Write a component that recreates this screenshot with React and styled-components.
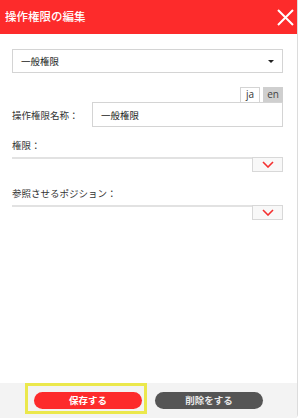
import React from 'react';
import styled, { createGlobalStyle } from 'styled-components';

const GlobalStyle = createGlobalStyle`
  html, body {
    margin: 0;
    padding: 0;
    background: #fff;
  }
  body {
    font-family: "Noto Sans CJK JP", "Noto Sans", sans-serif;
    color: #333;
  }
`;

const Panel = styled.div`
  width: 298px;
  height: 418px;
  display: flex;
  flex-direction: column;
  box-sizing: border-box;
  border-right: 1px solid #dcdcdc;
  border-bottom-right-radius: 4px;
  overflow: hidden;
`;

const Header = styled.div`
  height: 34px;
  flex: none;
  background: #fd2b2b;
  display: flex;
  align-items: center;
  justify-content: space-between;
  padding: 0 3px 2px 5px;
  box-sizing: border-box;
`;

const Title = styled.h1`
  margin: 0;
  font-size: 11.5px;
  font-weight: 500;
  color: #fff;
`;

const CloseBtn = styled.button`
  width: 17px;
  height: 17px;
  padding: 0;
  border: 0;
  background: none;
  display: flex;
  margin-top: 2px;
`;

const Body = styled.div`
  flex: 1;
  padding: 15px 14px 0 12px;
`;

const SelectBox = styled.div`
  height: 24px;
  box-sizing: border-box;
  border: 1px solid #d4d4d4;
  display: flex;
  align-items: center;
  justify-content: space-between;
  padding: 0 8px 0 8px;
  font-size: 9.5px;
  color: #222;
`;

const Caret = styled.span`
  width: 0;
  height: 0;
  border-left: 3px solid transparent;
  border-right: 3px solid transparent;
  border-top: 3px solid #222;
`;

const Tabs = styled.div`
  display: flex;
  justify-content: flex-end;
  gap: 3px;
  margin-top: 14px;
  height: 15px;
`;

const Tab = styled.div`
  width: 20px;
  height: 15px;
  box-sizing: border-box;
  font-family: "Open Sans", "Noto Sans", sans-serif;
  font-size: 10px;
  line-height: 13px;
  text-align: center;
  color: ${p => (p.active ? '#333' : '#444')};
  background: ${p => (p.active ? '#fff' : '#cfcfcf')};
  border: 1px solid ${p => (p.active ? '#d4d4d4' : '#cfcfcf')};
  border-bottom: 0;
`;

const NameRow = styled.div`
  display: flex;
  align-items: center;
`;

const Label = styled.div`
  font-size: 9.5px;
  color: #333;
  line-height: 12px;
  margin: ${p => p.margin || '0'};
`;

const NameLabel = styled(Label)`
  width: 80px;
  flex: none;
`;

const TextInput = styled.div`
  flex: 1;
  height: 25px;
  box-sizing: border-box;
  border: 1px solid #d4d4d4;
  display: flex;
  align-items: center;
  padding-left: 8px;
  font-size: 9.5px;
  color: #222;
`;

const MultiSelect = styled.div`
  border-top: 2px solid #e2e2e2;
  display: flex;
  justify-content: flex-end;
`;

const DropBtn = styled.button`
  width: 31px;
  height: 15px;
  margin-top: -2px;
  box-sizing: border-box;
  border: 1px solid #d8d8d8;
  background: #f8f8f8;
  padding: 0;
  display: flex;
  align-items: center;
  justify-content: center;
`;

const Footer = styled.div`
  height: 35px;
  flex: none;
  background: #f3f3f3;
  display: flex;
  align-items: flex-start;
  padding-left: 25px;
  gap: 8px;
`;

const FocusRing = styled.div`
  border: 3px solid #ebe84c;
  padding: 6px 2px 2px 6px;
`;

const PillButton = styled.button`
  display: block;
  width: 108px;
  height: 17px;
  border: 0;
  border-radius: 9px;
  background: ${p => p.bg};
  color: ${p => p.fg};
  font-family: "Noto Sans CJK JP", sans-serif;
  font-size: 9.5px;
  font-weight: 700;
  padding: 0;
  line-height: 17px;
  margin-top: ${p => p.offset || '0'};
`;

const Chevron = () => (
  <svg width="12" height="7" viewBox="0 0 12 7">
    <path d="M1 1 L6 6 L11 1" fill="none" stroke="#f43030" strokeWidth="1.6" />
  </svg>
);

const App = () => (
  <>
    <GlobalStyle />
    <Panel>
      <Header>
        <Title>操作権限の編集</Title>
        <CloseBtn>
          <svg width="17" height="17" viewBox="0 0 17 17">
            <path d="M1 1 L16 16 M16 1 L1 16" stroke="#fff" strokeWidth="2" />
          </svg>
        </CloseBtn>
      </Header>
      <Body>
        <SelectBox>
          一般権限
          <Caret />
        </SelectBox>
        <Tabs>
          <Tab active>ja</Tab>
          <Tab>en</Tab>
        </Tabs>
        <NameRow>
          <NameLabel>操作権限名称：</NameLabel>
          <TextInput>一般権限</TextInput>
        </NameRow>
        <Label margin="12px 0 6px">権限：</Label>
        <MultiSelect>
          <DropBtn><Chevron /></DropBtn>
        </MultiSelect>
        <Label margin="15px 0 6px">参照させるポジション：</Label>
        <MultiSelect>
          <DropBtn><Chevron /></DropBtn>
        </MultiSelect>
      </Body>
      <Footer>
        <FocusRing>
          <PillButton bg="#fd2b2b" fg="#fff">保存する</PillButton>
        </FocusRing>
        <PillButton bg="#555" fg="#e8e8e8" offset="9px">削除をする</PillButton>
      </Footer>
    </Panel>
  </>
);

export default App;
